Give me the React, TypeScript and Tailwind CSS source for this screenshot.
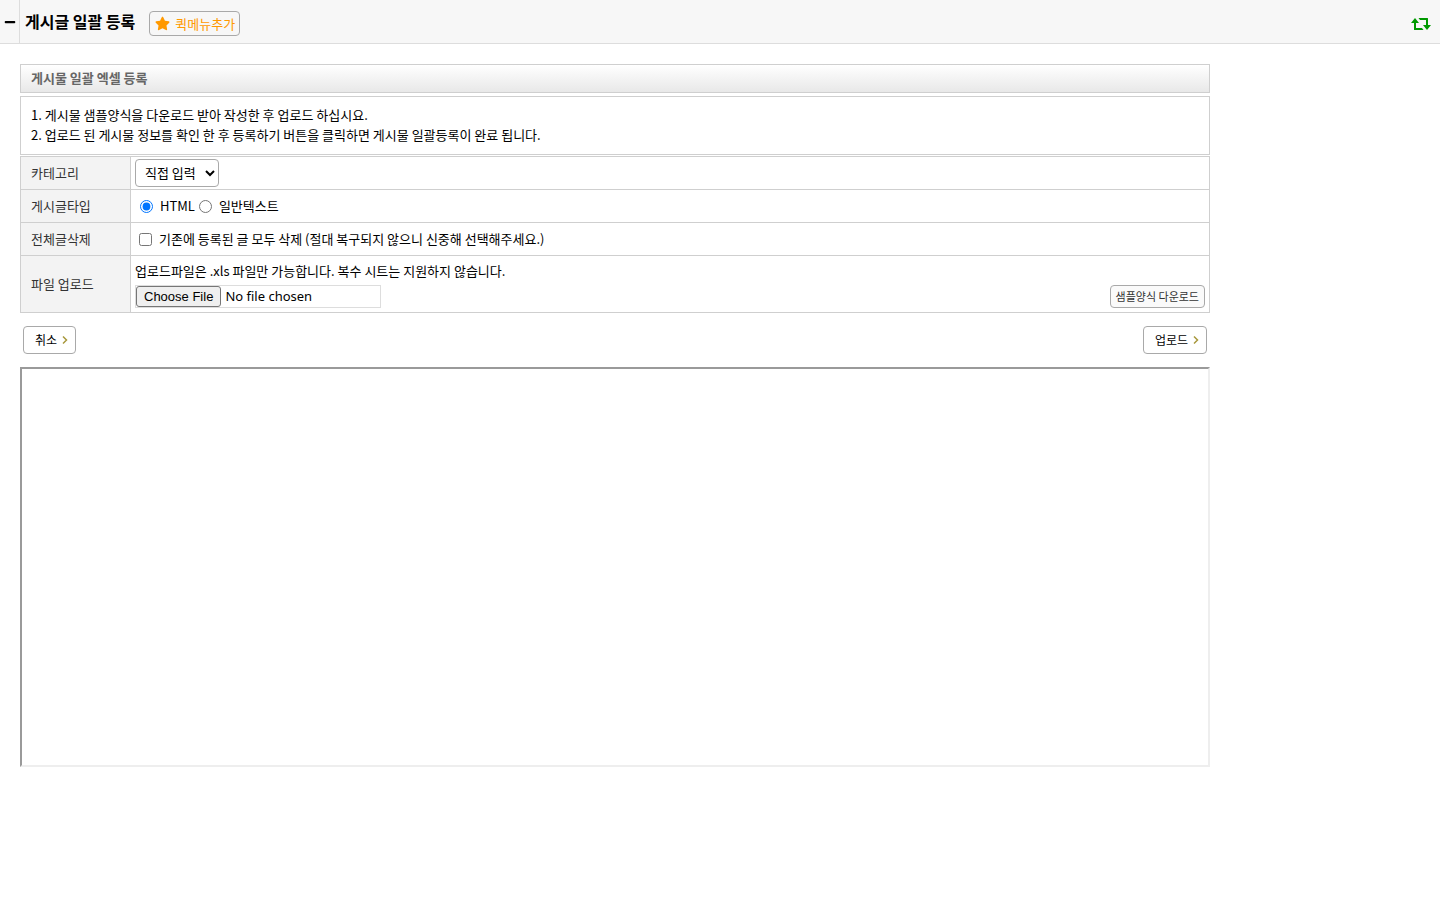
import React, { useState } from 'react';
import { FaMinus, FaStar } from 'react-icons/fa';

interface FormRowProps {
  label: string;
  htmlFor?: string;
  className?: string;
  children: React.ReactNode;
}

const FormRow = ({ label, htmlFor, className = 'h-[33px]', children }: FormRowProps) => (
  <tr className={className}>
    <th
      scope="row"
      className="w-[110px] border border-[#cfcfcf] bg-[#f3f3f3] pl-2.5 text-left font-normal text-[#333]"
    >
      {htmlFor ? <label htmlFor={htmlFor}>{label}</label> : label}
    </th>
    <td className="border border-[#cfcfcf] px-1">{children}</td>
  </tr>
);

const Chevron = () => (
  <svg viewBox="0 0 6 10" className="h-[10px] w-[6px]" fill="none" stroke="#a8983c" strokeWidth="1.5">
    <path d="M1 1.5 4.5 5 1 8.5" />
  </svg>
);

const RefreshIcon = () => (
  <svg viewBox="0 0 20 12" className="h-3 w-5" fill="currentColor">
    <path d="M4 0 8 5H5V10H11L12.5 12H3.5Q3 12 3 11.5V5H0Z" />
    <path d="M16 12 12 7H15V2H9L7.5 0H16.5Q17 0 17 .5V7H20Z" />
  </svg>
);

const ActionButton = ({ children }: { children: React.ReactNode }) => (
  <button
    type="button"
    className="flex h-7 items-center gap-[5px] rounded border border-[#a9a9a9] bg-white pr-[7px] pl-[11px] text-[12px]"
  >
    {children}
    <Chevron />
  </button>
);

const App = () => {
  const [category, setCategory] = useState('direct');
  const [postType, setPostType] = useState('html');
  const [deleteAll, setDeleteAll] = useState(false);

  return (
    <div className="font-['Noto_Sans_CJK_KR','Noto_Sans',sans-serif] text-[13px] leading-5 text-black">
      <header className="flex h-11 items-center border-b border-[#ddd] bg-[#f7f7f7]">
        <button
          type="button"
          aria-label="메뉴 접기"
          className="flex h-full w-5 items-center justify-center border-r border-[#ddd]"
        >
          <FaMinus className="size-3" />
        </button>
        <h1 className="pb-0.5 pl-[5px] text-[16px] font-bold">게시글 일괄 등록</h1>
        <button
          type="button"
          className="mt-1 ml-3.5 flex h-[25px] items-center gap-[5px] rounded border border-[#a9a9a9] pr-1 pl-[5px] text-[#ff9900]"
        >
          <FaStar className="size-[15px]" />
          퀵메뉴추가
        </button>
        <button type="button" aria-label="새로고침" className="mt-1 mr-[9px] ml-auto text-[#009900]">
          <RefreshIcon />
        </button>
      </header>

      <main className="max-w-[1230px] px-5 pt-5">
        <h2 className="mb-[3px] border border-[#cfcfcf] bg-linear-to-b from-white to-[#e8e8e8] px-2.5 pt-[3px] pb-[5px] leading-[19px] font-bold text-[#666]">
          게시물 일괄 엑셀 등록
        </h2>
        <ol className="mb-px border border-[#cfcfcf] px-2.5 pt-2 pb-[9px]">
          <li>1. 게시물 샘플양식을 다운로드 받아 작성한 후 업로드 하십시요.</li>
          <li>2. 업로드 된 게시물 정보를 확인 한 후 등록하기 버튼을 클릭하면 게시물 일괄등록이 완료 됩니다.</li>
        </ol>

        <form>
          <table className="w-full border-collapse">
            <tbody>
              <FormRow label="카테고리" htmlFor="category">
                <select
                  id="category"
                  value={category}
                  onChange={(e) => setCategory(e.target.value)}
                  className="block h-7 w-[84px] rounded border border-[#a9a9a9] bg-white pb-0.5 pl-[5px]"
                >
                  <option value="direct">직접 입력</option>
                </select>
              </FormRow>
              <FormRow label="게시글타입">
                <div className="flex items-center gap-1 pl-[5px]">
                  <label className="flex items-center gap-[7px]">
                    <input
                      type="radio"
                      name="postType"
                      className="size-[13px]"
                      checked={postType === 'html'}
                      onChange={() => setPostType('html')}
                    />
                    HTML
                  </label>
                  <label className="flex items-center gap-[7px]">
                    <input
                      type="radio"
                      name="postType"
                      className="size-[13px]"
                      checked={postType === 'text'}
                      onChange={() => setPostType('text')}
                    />
                    일반텍스트
                  </label>
                </div>
              </FormRow>
              <FormRow label="전체글삭제" htmlFor="deleteAll">
                <div className="flex items-center gap-[7px] pl-1">
                  <input
                    id="deleteAll"
                    type="checkbox"
                    className="size-[13px]"
                    checked={deleteAll}
                    onChange={(e) => setDeleteAll(e.target.checked)}
                  />
                  <label htmlFor="deleteAll">
                    기존에 등록된 글 모두 삭제 (절대 복구되지 않으니 신중해 선택해주세요.)
                  </label>
                </div>
              </FormRow>
              <FormRow label="파일 업로드" htmlFor="file" className="h-[57px]">
                <p>업로드파일은 .xls 파일만 가능합니다. 복수 시트는 지원하지 않습니다.</p>
                <div className="flex items-center justify-between pt-1">
                  <input
                    id="file"
                    type="file"
                    accept=".xls"
                    className="h-[23px] w-[246px] border border-[#ddd] font-['Noto_Sans',sans-serif] text-[13px] leading-[21px] file:mr-1 file:h-[21px] file:rounded-[3px] file:border file:border-solid file:border-[#767676] file:bg-[#efefef] file:px-[7px] file:font-['Liberation_Sans',sans-serif] file:text-[13px] file:leading-[19px]"
                  />
                  <button
                    type="button"
                    className="h-[23px] rounded border border-[#a9a9a9] bg-[#fafafa] px-[5px] text-[11px] text-[#333]"
                  >
                    샘플양식 다운로드
                  </button>
                </div>
              </FormRow>
            </tbody>
          </table>

          <div className="flex justify-between px-[3px] py-[13px]">
            <ActionButton>취소</ActionButton>
            <ActionButton>업로드</ActionButton>
          </div>
        </form>

        <iframe
          title="업로드 결과"
          className="h-[400px] w-full border-2 border-t-[#9a9a9a] border-r-[#eee] border-b-[#eee] border-l-[#9a9a9a]"
        />
      </main>
    </div>
  );
};

export default App;
